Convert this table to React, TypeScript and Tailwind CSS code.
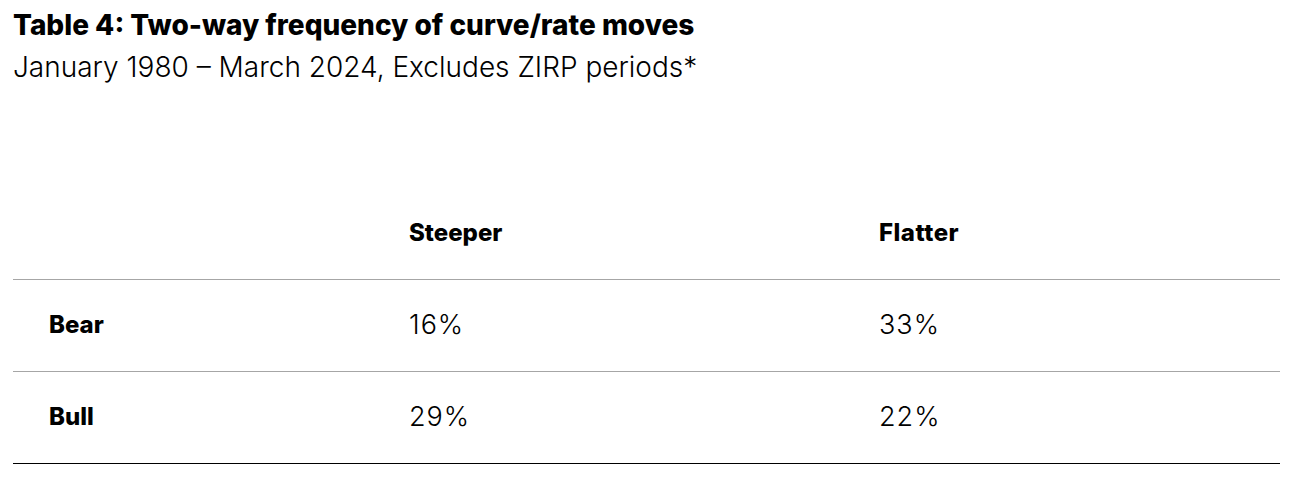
const rows = [
  { label: "Bear", steeper: "16%", flatter: "33%" },
  { label: "Bull", steeper: "29%", flatter: "22%" },
];

export default function App() {
  return (
    <div className="w-[1290px] h-[483px] bg-white text-black font-['Inter','Liberation_Sans',sans-serif] pl-[13px] pr-[10px] pt-[8px]">
      <h1 className="text-[28px] leading-[34px] font-extrabold">
        Table 4: Two-way frequency of curve/rate moves
      </h1>
      <p className="text-[28px] leading-[34px] font-light mt-[8px]">
        January 1980 – March 2024, Excludes ZIRP periods*
      </p>
      <table className="w-full mt-[103px] border-collapse table-fixed">
        <thead>
          <tr className="h-[92px] border-b border-[#a6a6a6]">
            <th className="w-[360px]" />
            <th className="w-[470px] text-left pl-[36px] text-[24px] font-extrabold">Steeper</th>
            <th className="text-left pl-[36px] text-[24px] font-extrabold tracking-[0.5px]">Flatter</th>
          </tr>
        </thead>
        <tbody>
          {rows.map((r, i) => (
            <tr
              key={r.label}
              className={`h-[92px] border-b ${i === rows.length - 1 ? "border-black" : "border-[#a6a6a6]"}`}
            >
              <td className="pl-[36px] text-[24px] font-extrabold">{r.label}</td>
              <td className="pl-[36px] text-[27px] font-light tracking-[1px]">{r.steeper}</td>
              <td className="pl-[36px] text-[27px] font-light tracking-[1px]">{r.flatter}</td>
            </tr>
          ))}
        </tbody>
      </table>
    </div>
  );
}
